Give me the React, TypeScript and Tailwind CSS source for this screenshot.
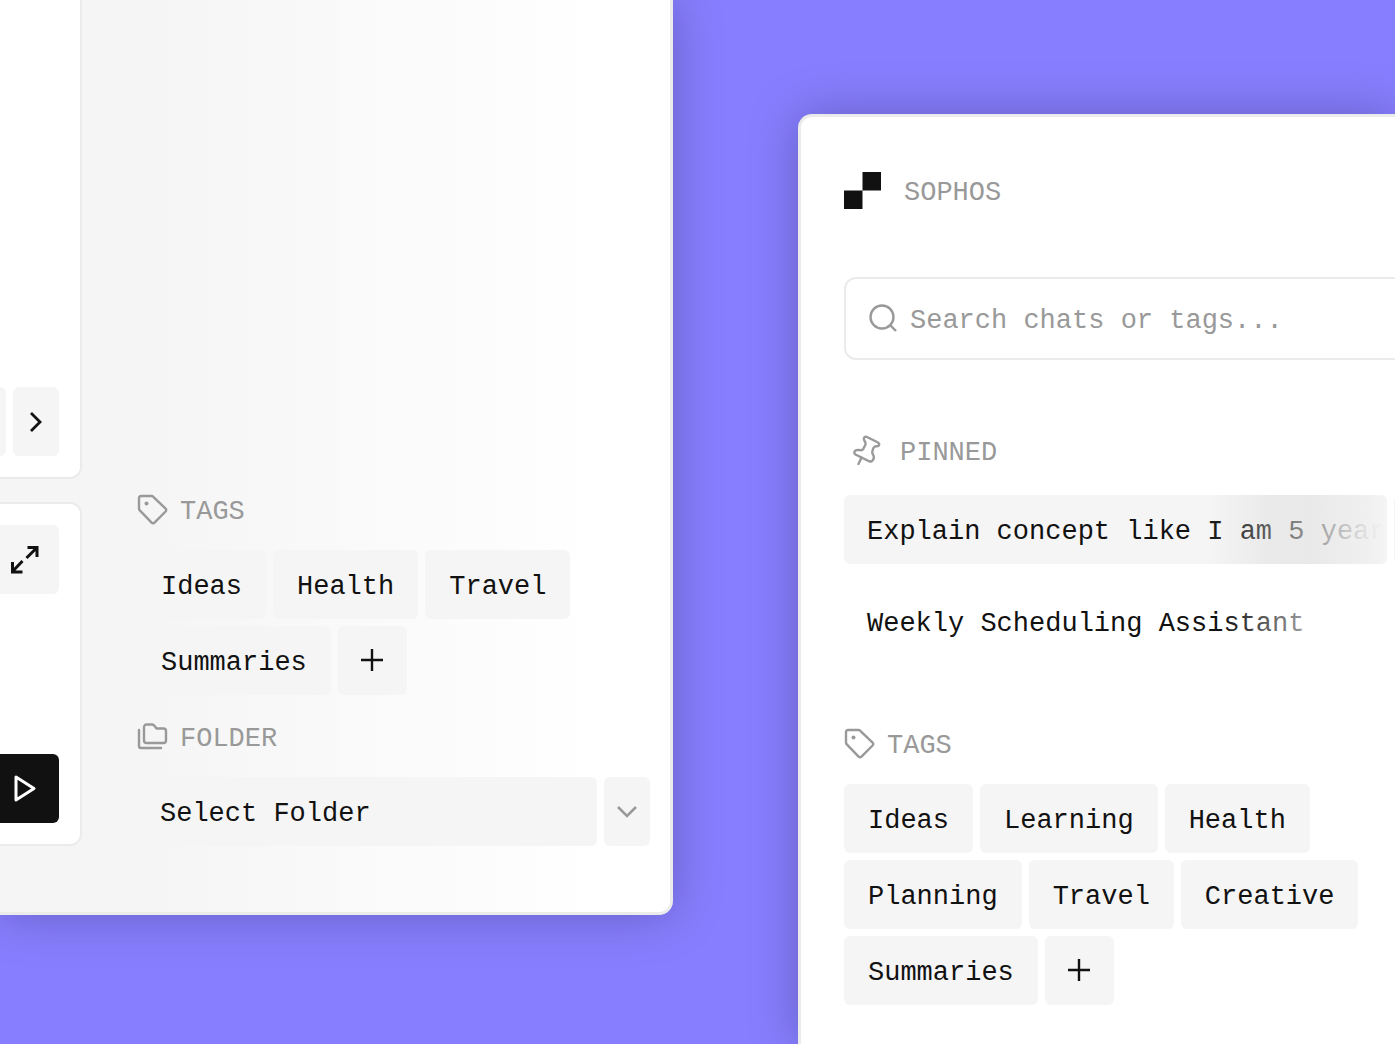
import type { ReactNode } from "react";

const chip = "h-[69px] rounded-md bg-[#f5f5f5] text-[#111]";

function TagIcon() {
  return (
    <svg width="31" height="31" viewBox="0 0 31 31" fill="none" stroke="#999" strokeWidth="2.4" strokeLinejoin="round" className="mb-1 shrink-0">
      <path d="M2 4a2 2 0 0 1 2-2H14.500a2.500 2.500 0 0 1 1.800.8L28.600 14.600a2 2 0 0 1 0 2.900L17.500 28.700a2 2 0 0 1-2.900 0L2.800 16.400a2.700 2.700 0 0 1-.8-1.800Z" />
      <circle cx="9.500" cy="9.500" r="2" fill="#999" stroke="none" />
    </svg>
  );
}

function FolderIcon() {
  return (
    <svg width="31" height="31" viewBox="0 0 31 31" fill="none" stroke="#999" strokeWidth="2.4" strokeLinejoin="round" strokeLinecap="round" className="mb-1 shrink-0">
      <path d="M7 6a2.500 2.500 0 0 1 2.500-2.500h5.500a3 3 0 0 1 2 .8L19.500 7.500H26.500a2.500 2.500 0 0 1 2.500 2.500v9.500a2.500 2.500 0 0 1-2.500 2.500H9.500a2.500 2.500 0 0 1-2.500-2.500Z" />
      <path d="M2 9v16a2 2 0 0 0 2 2H24" />
    </svg>
  );
}

function PinIcon() {
  return (
    <svg width="30" height="30" viewBox="0 0 30 30" fill="none" stroke="#999" strokeWidth="2.4" strokeLinejoin="round" strokeLinecap="round" className="mr-1.5 mb-1 shrink-0">
      <path d="M14.500 1.800 25.500 7.300C28.500 9 27 11.500 24.500 11.300 22.500 11.200 21.800 12 21.300 13.200L20.300 16.500C20 17.700 20.300 18.500 21 19.500 22.300 21.800 22 24 20.500 25.500 19.500 26.800 18.300 26.800 17 26.200L3.500 19.500C1.500 18.300 2 16 4.500 15.200 6 14.700 7.500 15 9 15.200 10 15.200 10.700 14.800 11.300 13.800L13.300 10C13.800 9 13.800 8.200 13.200 7.200L12 4.800C11.300 2.800 12.800 1.300 14.500 1.800Z" />
      <path d="m9.500 22.500-3 6.500" />
    </svg>
  );
}

function PlusIcon() {
  return (
    <svg width="22" height="22" viewBox="0 0 22 22" stroke="#111" strokeWidth="2.4" className="mb-0.5 shrink-0">
      <path d="M11 0v22M0 11h22" />
    </svg>
  );
}

function SectionTitle({ icon, children }: { icon: ReactNode; children: ReactNode }) {
  return (
    <h2 className="flex items-center gap-3 leading-10 text-[#999]">
      {icon}
      <span className="pt-0.5">{children}</span>
    </h2>
  );
}

function TagList({ tags }: { tags: string[] }) {
  return (
    <div className="mt-[18px] flex flex-wrap gap-[7px]">
      {tags.map((tag) => (
        <button key={tag} className={`${chip} px-6 pt-1.5`}>
          {tag}
        </button>
      ))}
      <button aria-label="Add tag" className={`${chip} flex w-[69px] items-center justify-center`}>
        <PlusIcon />
      </button>
    </div>
  );
}

function ChatWindow() {
  return (
    <section className="mb-[129px] flex min-w-0 rounded-br-[14px] border-r-[3px] border-b-[3px] border-[#ebebeb] bg-white bg-linear-to-r from-[#f5f5f5] from-20% to-white to-90% pb-[66px] shadow-[0_0_50px_rgba(0,0,0,0.25)]">
      <div className="flex w-[82px] shrink-0 flex-col gap-[23px]">
        <div className="flex flex-1 items-end justify-end gap-[7px] rounded-br-xl border-r-2 border-b-2 border-[#ebebeb] bg-white p-[21px]">
          <button aria-label="Previous" className={`${chip} w-[46px] shrink-0`} />
          <button aria-label="Next" className={`${chip} flex w-[46px] shrink-0 items-center justify-center`}>
            <svg width="14" height="20" viewBox="0 0 14 20" fill="none" stroke="#111" strokeWidth="2.8">
              <path d="m2 1 9 9-9 9" />
            </svg>
          </button>
        </div>
        <div className="flex flex-col items-end gap-40 rounded-r-xl border-y-2 border-r-2 border-[#ebebeb] bg-white p-[21px]">
          <button aria-label="Expand" className={`${chip} flex w-[69px] shrink-0 items-center justify-center`}>
            <svg width="28" height="28" viewBox="0 0 28 28" fill="none" stroke="#111" strokeWidth="3">
              <path d="M15.500 12 26 1.500M16.500 1.500h9.500V11M11.500 15 1.500 25.500M1.500 16v10H11.500" />
            </svg>
          </button>
          <button aria-label="Send" className="flex size-[69px] shrink-0 items-center justify-center rounded-md bg-[#111]">
            <svg width="24" height="28" viewBox="0 0 24 28" fill="none" stroke="#fff" strokeWidth="3" strokeLinejoin="round">
              <path d="M3 2v23l18-11.500Z" />
            </svg>
          </button>
        </div>
      </div>

      <aside className="flex min-w-0 flex-1 flex-col justify-end gap-[22px] pr-5 pl-[55px]">
        <div>
          <SectionTitle icon={<TagIcon />}>TAGS</SectionTitle>
          <TagList tags={["Ideas", "Health", "Travel", "Summaries"]} />
        </div>
        <div>
          <SectionTitle icon={<FolderIcon />}>FOLDER</SectionTitle>
          <div className="mt-[18px] flex gap-[7px]">
            <select aria-label="Folder" className={`${chip} min-w-0 flex-1 appearance-none px-[23px] pt-1.5`}>
              <option>Select Folder</option>
            </select>
            <button aria-label="Open folder list" className={`${chip} flex w-[46px] items-center justify-center`}>
              <svg width="20" height="12" viewBox="0 0 20 12" fill="none" stroke="#999" strokeWidth="2.500">
                <path d="m1 1 9 9 9-9" />
              </svg>
            </button>
          </div>
        </div>
      </aside>
    </section>
  );
}

function Sidebar() {
  return (
    <section className="mt-[114px] min-w-0 rounded-tl-[14px] border-t-[3px] border-l-[3px] border-[#ebebeb] bg-white pt-[54px] pl-[43px] shadow-[0_0_50px_rgba(0,0,0,0.25)]">
      <header className="flex items-center gap-[23px] leading-10 text-[#999]">
        <svg width="37" height="37" viewBox="0 0 37 37" fill="#111" className="mb-1">
          <path d="M18.500 0H37v18.500H18.500zM0 18.500h18.500V37H0z" />
        </svg>
        <span className="pt-0.5">SOPHOS</span>
      </header>

      <label className="mt-16 flex h-[83px] items-center gap-3 rounded-l-xl border-y-2 border-l-2 border-[#ebebeb] pl-[23px]">
        <svg width="29" height="29" viewBox="0 0 29 29" fill="none" stroke="#999" strokeWidth="2.4" className="shrink-0">
          <circle cx="13" cy="13" r="11.500" />
          <path d="m21 21 6 6" />
        </svg>
        <input type="text" aria-label="Search" placeholder="Search chats or tags..." className="min-w-0 flex-1 pt-1.5 outline-none placeholder:text-[#999]" />
      </label>

      <div className="mt-[71px] pl-2">
        <SectionTitle icon={<PinIcon />}>PINNED</SectionTitle>
      </div>
      <div className="mt-[22px] flex flex-col gap-[23px]">
        <div className="flex gap-[7px]">
          <button className={`${chip} relative min-w-0 flex-1 overflow-hidden pt-1.5 pl-[23px] text-left whitespace-nowrap`}>
            Explain concept like I am 5 year
            <span className="absolute inset-y-0 right-0 w-[180px] bg-[linear-gradient(to_right,#d9d9d900,#d9d9d966_35%,#e3e3e3a6_60%,#f0f0f0f2_90%,#f5f5f5)]" />
          </button>
          <button aria-label="More" className={`${chip} -mr-[45px] w-[46px] shrink-0`} />
        </div>
        <button className="relative mr-2 h-[69px] overflow-hidden px-[23px] pt-1.5 text-left whitespace-nowrap text-[#111]">
          Weekly Scheduling Assistant
          <span className="absolute inset-y-0 right-0 w-[165px] bg-linear-to-r from-white/0 to-white to-85%" />
        </button>
      </div>

      <div className="mt-[68px]">
        <SectionTitle icon={<TagIcon />}>TAGS</SectionTitle>
        <TagList tags={["Ideas", "Learning", "Health", "Planning", "Travel", "Creative", "Summaries"]} />
      </div>
    </section>
  );
}

export default function App() {
  return (
    <main className="grid h-screen grid-cols-[673fr_597fr] gap-x-[125px] overflow-hidden bg-[#877eff] font-['Liberation_Mono',monospace] text-[27px]">
      <ChatWindow />
      <Sidebar />
    </main>
  );
}
